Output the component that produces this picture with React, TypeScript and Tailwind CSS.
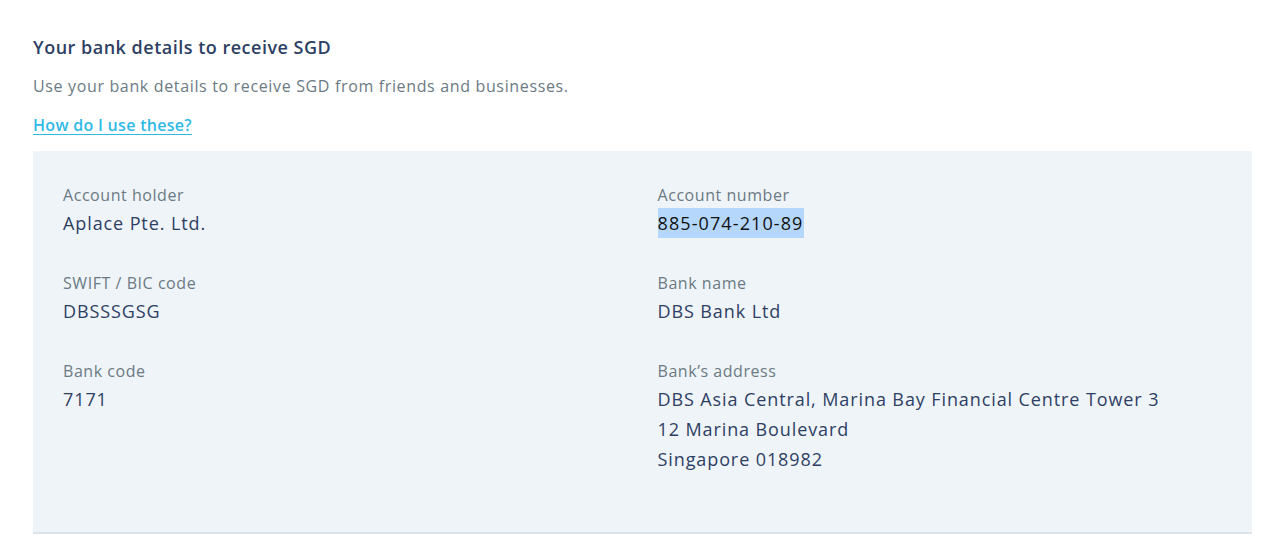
import React from "react";

function Field({ label, children }: { label: string; children: React.ReactNode }) {
  return (
    <div className="flex flex-col">
      <div className="text-[16px] leading-[25px] tracking-[0.55px] text-[#6b7a84]">{label}</div>
      <div className="text-[18px] leading-[30px] tracking-[0.9px] text-[#2e3f64]">{children}</div>
    </div>
  );
}

export default function App() {
  return (
    <div className="w-[1280px] h-[559px] bg-white font-['Open_Sans'] pt-[34px] pl-[33px] pr-[28px]">
      <h2 className="text-[18px] leading-[26px] font-semibold tracking-[0.5px] text-[#2e3f64]">
        Your bank details to receive SGD
      </h2>
      <p className="mt-[14px] text-[16px] leading-[24px] tracking-[0.65px] text-[#6b7a84]">
        Use your bank details to receive SGD from friends and businesses.
      </p>
      <a
        href="#"
        className="mt-[15px] inline-block text-[16px] leading-[24px] font-semibold tracking-[0.3px] text-[#2fb9e6] underline underline-offset-[3px]"
      >
        How do I use these?
      </a>
      <div className="mt-[14px] bg-[#eff4f8] border-b-2 border-[#dde5eb] px-[30px] pt-[32px] pb-[58px] grid grid-cols-2 gap-x-[30px] gap-y-[33px]">
        <Field label="Account holder">Aplace Pte. Ltd.</Field>
        <Field label="Account number">
          <span className="bg-[#b4d7fb] text-[#111] py-[3px] tracking-[1.1px]">885-074-210-89</span>
        </Field>
        <Field label="SWIFT / BIC code">DBSSSGSG</Field>
        <Field label="Bank name">DBS Bank Ltd</Field>
        <Field label="Bank code">7171</Field>
        <Field label="Bank’s address">
          <div>DBS Asia Central, Marina Bay Financial Centre Tower 3</div>
          <div>12 Marina Boulevard</div>
          <div>Singapore 018982</div>
        </Field>
      </div>
    </div>
  );
}
